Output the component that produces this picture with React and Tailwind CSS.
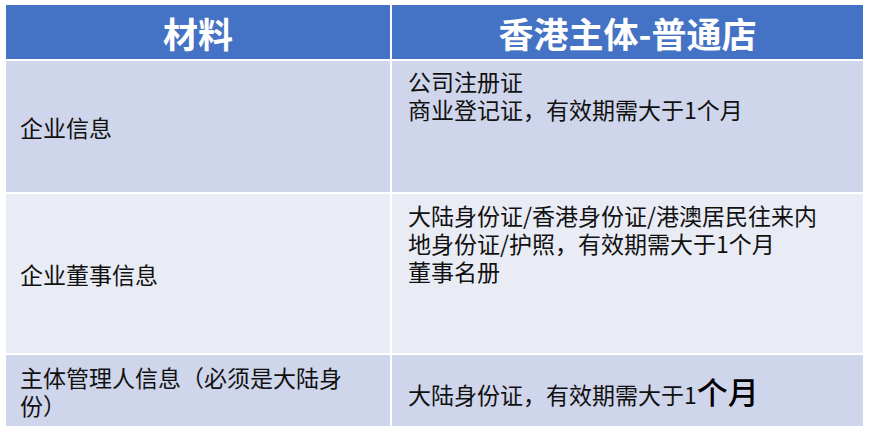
export default function App() {
  const font = { fontFamily: '"Noto Sans CJK SC", "Noto Sans", sans-serif' };
  return (
    <div className="w-[875px] h-[432px] bg-white pt-[5px] pl-[6px] text-[#111]" style={font}>
      <div className="grid grid-cols-[384px_471px] grid-rows-[54px_131px_159px_71px] gap-x-[2px] gap-y-[2px]">
        <div className="bg-[#4472c4] flex items-center justify-center text-white font-bold text-[35px] leading-none">材料</div>
        <div className="bg-[#4472c4] flex items-center justify-center text-white font-bold text-[35px] leading-none">香港主体-普通店</div>

        <div className="bg-[#cfd5ea] flex items-center pl-[14px] text-[23px] leading-[28px]">企业信息</div>
        <div className="bg-[#cfd5ea] pt-[6px] pl-[16px] text-[23px] leading-[28px]">
          公司注册证<br />商业登记证，有效期需大于1个月
        </div>

        <div className="bg-[#e9ebf5] flex items-center pl-[14px] text-[23px] leading-[28px]">企业董事信息</div>
        <div className="bg-[#e9ebf5] pt-[7px] pl-[16px] text-[23px] leading-[28px]">
          大陆身份证/香港身份证/港澳居民往来内<br />地身份证/护照，有效期需大于1个月<br />董事名册
        </div>

        <div className="bg-[#cfd5ea] flex items-center pl-[14px] text-[23px] leading-[28px]">
          <div>主体管理人信息（必须是大陆身<br />份）</div>
        </div>
        <div className="bg-[#cfd5ea] flex items-center pl-[16px] text-[23px] leading-[28px]">
          <div className="pt-[4px]">
            大陆身份证，有效期需大于1<span className="text-[31px] font-medium text-black">个月</span>
          </div>
        </div>
      </div>
    </div>
  );
}
